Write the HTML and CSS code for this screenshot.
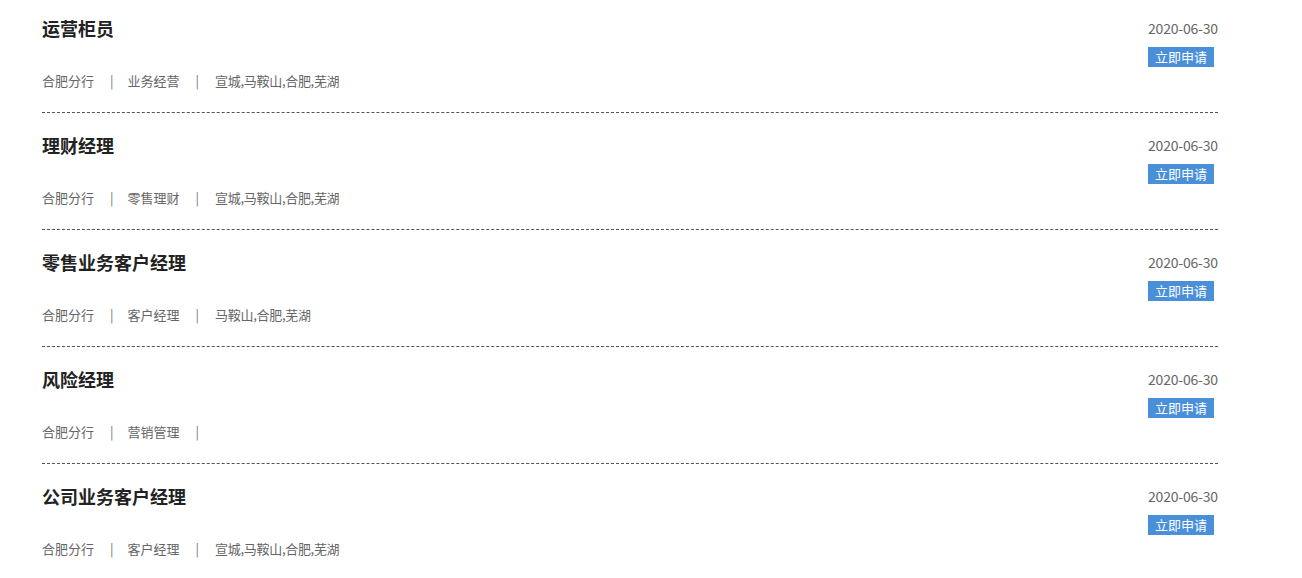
FILE: index.html
```html
<!DOCTYPE html>
<html>
<head>
  <meta charset="utf-8">
  <link rel="stylesheet" href="styles.css">
  <title>招聘岗位</title>
</head>
<body>
  <div class="job-list">
    <div class="job">
      <div class="job-main">
        <h3 class="job-title">运营柜员</h3>
        <div class="job-meta">
          <span>合肥分行</span><span class="sep">|</span><span>业务经营</span><span class="sep">|</span><span class="city">宣城,马鞍山,合肥,芜湖</span>
        </div>
      </div>
      <div class="job-side">
        <div class="job-date">2020-06-30</div>
        <a class="apply" href="#">立即申请</a>
      </div>
    </div>

    <div class="job">
      <div class="job-main">
        <h3 class="job-title">理财经理</h3>
        <div class="job-meta">
          <span>合肥分行</span><span class="sep">|</span><span>零售理财</span><span class="sep">|</span><span class="city">宣城,马鞍山,合肥,芜湖</span>
        </div>
      </div>
      <div class="job-side">
        <div class="job-date">2020-06-30</div>
        <a class="apply" href="#">立即申请</a>
      </div>
    </div>

    <div class="job">
      <div class="job-main">
        <h3 class="job-title">零售业务客户经理</h3>
        <div class="job-meta">
          <span>合肥分行</span><span class="sep">|</span><span>客户经理</span><span class="sep">|</span><span class="city">马鞍山,合肥,芜湖</span>
        </div>
      </div>
      <div class="job-side">
        <div class="job-date">2020-06-30</div>
        <a class="apply" href="#">立即申请</a>
      </div>
    </div>

    <div class="job">
      <div class="job-main">
        <h3 class="job-title">风险经理</h3>
        <div class="job-meta">
          <span>合肥分行</span><span class="sep">|</span><span>营销管理</span><span class="sep">|</span><span class="city"></span>
        </div>
      </div>
      <div class="job-side">
        <div class="job-date">2020-06-30</div>
        <a class="apply" href="#">立即申请</a>
      </div>
    </div>

    <div class="job">
      <div class="job-main">
        <h3 class="job-title">公司业务客户经理</h3>
        <div class="job-meta">
          <span>合肥分行</span><span class="sep">|</span><span>客户经理</span><span class="sep">|</span><span class="city">宣城,马鞍山,合肥,芜湖</span>
        </div>
      </div>
      <div class="job-side">
        <div class="job-date">2020-06-30</div>
        <a class="apply" href="#">立即申请</a>
      </div>
    </div>
  </div>
</body>
</html>
```

FILE: styles.css
```css
body {
  margin: 0;
  background-color: #fff;
  font-family: "Noto Sans CJK SC", "Noto Sans", sans-serif;
  color: #666;
}

.job-list {
  width: 1176px;
  margin-left: 42px;
}

.job {
  display: flex;
  justify-content: space-between;
  padding: 20px 0 21px;
  border-bottom: 1px dashed #555;
}

.job:first-child {
  padding-top: 16px;
}

.job-title {
  margin: 0;
  font-size: 18px;
  line-height: 24px;
  font-weight: bold;
  color: #222;
}

.job-meta {
  margin-top: 31px;
  font-size: 13px;
  line-height: 20px;
  color: #666;
}

.sep {
  margin: 0 14px 0 16px;
  color: #777;
}

.city {
  margin-left: 2px;
  letter-spacing: -0.3px;
}

.job-side {
  width: 70px;
}

.job-date {
  font-size: 14px;
  line-height: 24px;
  letter-spacing: -0.2px;
  white-space: nowrap;
  color: #666;
}

.apply {
  display: inline-block;
  margin-top: 7px;
  padding: 0 7px;
  line-height: 20px;
  font-size: 13px;
  color: #fff;
  background-color: #4a90d9;
  text-decoration: none;
}
```
